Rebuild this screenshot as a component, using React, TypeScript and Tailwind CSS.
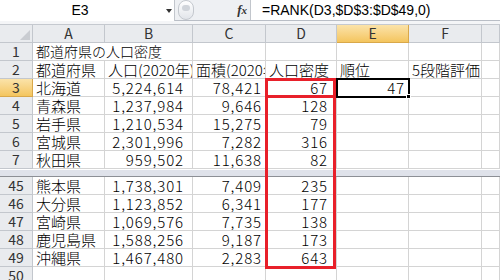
import React from "react";

const font = { fontFamily: '"Noto Sans CJK JP", "Noto Sans", sans-serif' };

const colW = ["w-[72px]", "w-[88px]", "w-[73px]", "w-[71px]", "w-[72px]", "w-[73px]", "flex-1"];
const numAlign = [
  "justify-start pl-[3px]",
  "justify-end pr-[8px] tracking-[0.9px]",
  "justify-end pr-[3px] tracking-[0.9px]",
  "justify-end pr-[8px] tracking-[0.9px]",
  "justify-end pr-[3px] tracking-[0.9px]",
  "justify-start pl-[3px]",
  "",
];

const topRows: string[][] = [
  ["北海道", "5,224,614", "78,421", "67", "47", "", ""],
  ["青森県", "1,237,984", "9,646", "128", "", "", ""],
  ["岩手県", "1,210,534", "15,275", "79", "", "", ""],
  ["宮城県", "2,301,996", "7,282", "316", "", "", ""],
  ["秋田県", "959,502", "11,638", "82", "", "", ""],
];

const bottomRows: string[][] = [
  ["熊本県", "1,738,301", "7,409", "235", "", "", ""],
  ["大分県", "1,123,852", "6,341", "177", "", "", ""],
  ["宮崎県", "1,069,576", "7,735", "138", "", "", ""],
  ["鹿児島県", "1,588,256", "9,187", "173", "", "", ""],
  ["沖縄県", "1,467,480", "2,283", "643", "", "", ""],
  ["", "", "", "", "", "", ""],
];

const RowHead = ({ n, active }: { n: number; active?: boolean }) => (
  <div
    className={
      "w-[33px] h-[18px] shrink-0 flex items-center justify-center border-r border-b text-[14px] leading-[17px] text-[#333] " +
      (active
        ? "bg-gradient-to-b from-[#fbe3a9] to-[#f4c55d] border-[#d9a84a]"
        : "bg-[#e9ebee] border-[#c3c7cd]")
    }
  >
    {n}
  </div>
);

const Row = ({ n, cells, active }: { n: number; cells: string[]; active?: boolean }) => (
  <div className="flex h-[18px]">
    <RowHead n={n} active={active} />
    {cells.map((c, i) => (
      <div
        key={i}
        className={
          "h-[18px] shrink-0 flex items-center overflow-hidden whitespace-nowrap border-r border-b border-[#d4d4d4] text-[15px] leading-[17px] font-light text-black " +
          colW[i] +
          " " +
          numAlign[i]
        }
      >
        {c}
      </div>
    ))}
  </div>
);

export default function App() {
  const heads = ["A", "B", "C", "D", "E", "F", ""];
  const row2 = ["都道府県", "人口(2020年)", "面積(2020年)", "人口密度", "順位", "5段階評価", ""];
  return (
    <div className="relative w-[500px] h-[280px] overflow-hidden bg-white" style={font}>
      {/* formula bar */}
      <div className="flex h-[21px] bg-[#eef0f3] border-b border-[#b9bec6]">
        <div className="relative w-[175px] h-[21px] bg-white border-r border-[#c2c6cc] flex items-center">
          <span className="w-[160px] text-center text-[14px] leading-[17px] text-black" style={{ fontFamily: '"Liberation Sans", sans-serif' }}>
            E3
          </span>
          <div className="absolute left-[166px] top-[9px] w-0 h-0 border-l-[3px] border-r-[3px] border-t-[4px] border-l-transparent border-r-transparent border-t-[#333]" />
        </div>
        <div className="w-[16px] h-[20px] ml-[3px] rounded-full border border-[#c4c8ce] bg-gradient-to-b from-white to-[#e2e5ea] flex items-start justify-center">
          <div className="w-[8px] h-[6px] mt-[4px] rounded-full bg-[#d0d4da]" />
        </div>
        <div className="w-[56px] flex items-center justify-end pr-[3px]">
          <span className="text-[13px] leading-[17px] italic font-bold text-[#333]" style={{ fontFamily: '"Liberation Serif", serif' }}>
            f<span className="text-[11px]">x</span>
          </span>
        </div>
        <div className="flex-1 bg-white border-l border-[#c2c6cc] flex items-center pl-[11px]">
          <span className="text-[14px] leading-[17px] text-black whitespace-nowrap" style={{ fontFamily: '"Liberation Sans", sans-serif' }}>
            =RANK(D3,$D$3:$D$49,0)
          </span>
        </div>
      </div>
      <div className="h-[4px] bg-[#f4f5f7] border-b border-[#c5c9cf]" />

      {/* column headers */}
      <div className="flex h-[18px]">
        <div className="relative w-[33px] h-[18px] bg-[#e9ebee] border-r border-b border-[#c3c7cd]">
          <div className="absolute right-[2px] bottom-[2px] w-0 h-0 border-l-[10px] border-t-[10px] border-l-transparent border-t-transparent border-r-0 border-b-[10px] border-b-[#c9ccd1]" />
        </div>
        {heads.map((h, i) => (
          <div
            key={i}
            className={
              "h-[18px] shrink-0 flex items-center justify-center border-r border-b text-[14px] leading-[17px] text-[#333] " +
              colW[i] +
              " " +
              (h === "E"
                ? "bg-gradient-to-b from-[#fbe3a9] to-[#f4c55d] border-[#d9a84a]"
                : "bg-[#e9ebee] border-[#c3c7cd]")
            }
          >
            {h}
          </div>
        ))}
      </div>

      {/* row 1 */}
      <div className="flex h-[18px]">
        <RowHead n={1} />
        <div className="w-[160px] h-[18px] shrink-0 flex items-center pl-[3px] whitespace-nowrap border-r border-b border-[#d4d4d4] text-[14px] leading-[17px] font-light text-black">
          都道府県の人口密度
        </div>
        {colW.slice(2).map((w, i) => (
          <div key={i} className={"h-[18px] shrink-0 border-r border-b border-[#d4d4d4] " + w} />
        ))}
      </div>

      {/* row 2 */}
      <div className="flex h-[18px]">
        <RowHead n={2} />
        {row2.map((c, i) => (
          <div
            key={i}
            className={
              "h-[18px] shrink-0 flex items-center overflow-hidden whitespace-nowrap border-r border-b border-[#d4d4d4] text-[15px] leading-[17px] font-light text-black pl-[3px] " +
              colW[i]
            }
          >
            {c}
          </div>
        ))}
      </div>

      {topRows.map((r, i) => (
        <Row key={i} n={i + 3} cells={r} active={i === 0} />
      ))}

      {/* split bar */}
      <div className="h-[7px] bg-[#dfe2ea] border-t border-white" />
      <div className="h-[1px] bg-[#8c8f95]" />

      {bottomRows.map((r, i) => (
        <Row key={i} n={i + 45} cells={r} />
      ))}

      {/* red highlight around column D */}
      <div className="absolute left-[265px] top-[78px] w-[71px] h-[191px] border-[3px] border-[#e8202a]" />
      <div className="absolute left-[265px] top-[95px] w-[71px] h-[3px] bg-[#e8202a]" />

      {/* active cell E3 */}
      <div className="absolute left-[336px] top-[78px] w-[74px] h-[20px] border-2 border-black" />
      <div className="absolute left-[406px] top-[94px] w-[5px] h-[5px] bg-black border border-white" />
    </div>
  );
}
